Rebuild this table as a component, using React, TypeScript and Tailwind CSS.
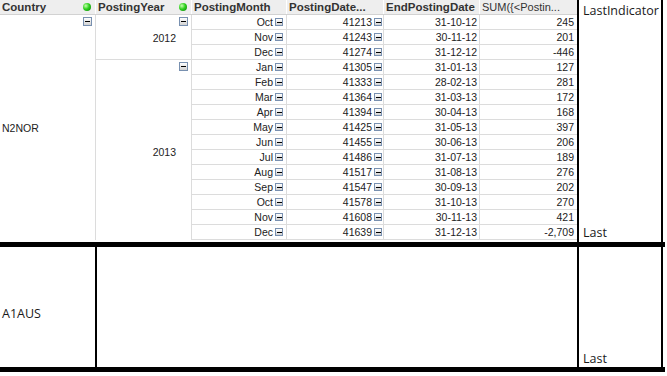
const rows = [
  ["Oct", "41213", "31-10-12", "245"],
  ["Nov", "41243", "30-11-12", "201"],
  ["Dec", "41274", "31-12-12", "-446"],
  ["Jan", "41305", "31-01-13", "127"],
  ["Feb", "41333", "28-02-13", "281"],
  ["Mar", "41364", "31-03-13", "172"],
  ["Apr", "41394", "30-04-13", "168"],
  ["May", "41425", "31-05-13", "397"],
  ["Jun", "41455", "30-06-13", "206"],
  ["Jul", "41486", "31-07-13", "189"],
  ["Aug", "41517", "31-08-13", "276"],
  ["Sep", "41547", "30-09-13", "202"],
  ["Oct", "41578", "31-10-13", "270"],
  ["Nov", "41608", "30-11-13", "421"],
  ["Dec", "41639", "31-12-13", "-2,709"],
];

// small collapse box used by the pivot table
function Minus({ big = false }: { big?: boolean }) {
  return (
    <div
      className={`${
        big ? "w-[9px] h-[9px]" : "w-[8px] h-[8px]"
      } shrink-0 flex items-center justify-center border border-[#7890b0] bg-gradient-to-b from-white to-[#d2d2d2]`}
    >
      <div className="w-[5px] h-[1px] bg-black" />
    </div>
  );
}

function Dot() {
  return (
    <div className="w-[8px] h-[8px] shrink-0 rounded-full bg-[radial-gradient(circle_at_35%_35%,#c8ffb0,#2fd21f_45%,#087a08)]" />
  );
}

const seg = "font-['Open_Sans',sans-serif] text-[12.5px] leading-[17px] text-[#1a1a1a]";

export default function App() {
  return (
    <div className="w-[667px] h-[376px] bg-white overflow-hidden font-['Liberation_Sans',Arial,sans-serif]">
      {/* top block */}
      <div className="flex h-[242px]">
        <div className="w-[577px] flex flex-col">
          {/* header */}
          <div className="grid grid-cols-[96px_96px_95px_97px_96px_97px] h-[15px] bg-[#eeeeee] border-b border-[#d2d2d2] text-[11.5px] leading-[14px] text-[#333]">
            <div className="flex items-center justify-between pl-[2px] pr-[4px] border-r border-white font-bold">
              <span>Country</span>
              <Dot />
            </div>
            <div className="flex items-center justify-between pl-[2px] pr-[4px] border-r border-white font-bold">
              <span>PostingYear</span>
              <Dot />
            </div>
            <div className="flex items-center pl-[2px] border-r border-white font-bold">PostingMonth</div>
            <div className="flex items-center pl-[2px] border-r border-white font-bold">PostingDate...</div>
            <div className="flex items-center pl-[2px] border-r border-white font-bold">EndPostingDate</div>
            <div className="flex items-center pl-[2px] text-[11px]">SUM({"{"}&lt;Postin...</div>
          </div>

          {/* body */}
          <div className="grid grid-cols-[96px_96px_95px_97px_96px_97px] grid-rows-[repeat(15,15px)] text-[10.5px] leading-[14px] text-[#222]">
            <div className="col-start-1 row-start-1 row-span-15 relative flex items-center pl-[2px] border-r border-[#dcdcdc]">
              <span className="pt-[1px]">N2NOR</span>
              <div className="absolute top-[2px] right-[3px]">
                <Minus big />
              </div>
            </div>
            <div className="col-start-2 row-start-1 row-span-3 relative flex items-center justify-end pr-[15px] border-r border-b border-[#dcdcdc]">
              <span className="pt-[1px]">2012</span>
              <div className="absolute top-[2px] right-[3px]">
                <Minus big />
              </div>
            </div>
            <div className="col-start-2 row-start-4 row-span-12 relative flex items-center justify-end pr-[15px] border-r border-[#dcdcdc]">
              <span className="pt-[3px]">2013</span>
              <div className="absolute top-[2px] right-[3px]">
                <Minus big />
              </div>
            </div>

            {rows.map(([m, d, e, v], i) => (
              <div key={i} className="contents">
                <div className="flex items-center justify-end gap-[2px] pr-[3px] border-r border-b border-[#dcdcdc]">
                  <span>{m}</span>
                  <Minus />
                </div>
                <div className="flex items-center justify-end gap-[2px] pr-[1px] border-r border-b border-[#dcdcdc]">
                  <span>{d}</span>
                  <Minus />
                </div>
                <div className="flex items-center justify-end pr-[2px] border-r border-b border-[#dcdcdc]">
                  {e}
                </div>
                <div className="flex items-center justify-end pr-[3px] border-b border-[#dcdcdc]">
                  {v}
                </div>
              </div>
            ))}
          </div>
        </div>

        <div className={`w-[86px] border-x-2 border-black flex flex-col justify-between pl-[4px] pt-[2px] pb-[1px] ${seg}`}>
          <span>LastIndicator</span>
          <span>Last</span>
        </div>
      </div>

      <div className="w-[665px] h-[5px] bg-black" />

      {/* second country */}
      <div className="flex h-[120px]">
        <div className={`w-[97px] border-r-2 border-black flex items-center pl-[2px] pt-[12px] ${seg}`}>
          A1AUS
        </div>
        <div className="w-[480px]" />
        <div className={`w-[86px] border-x-2 border-black flex items-end pl-[4px] ${seg}`}>
          <span>Last</span>
        </div>
      </div>

      <div className="w-[665px] h-[5px] bg-black" />
    </div>
  );
}
